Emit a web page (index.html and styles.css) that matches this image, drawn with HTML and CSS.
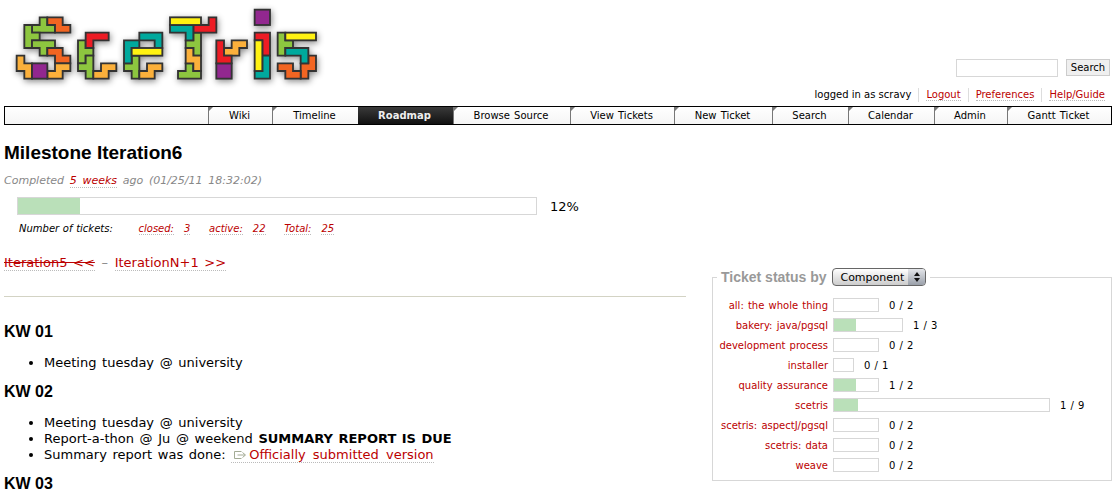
FILE: index.html
```html
<!DOCTYPE html>
<html lang="en">
<head>
<meta charset="utf-8">
<title>Milestone Iteration6</title>
<link rel="stylesheet" href="styles.css">
</head>
<body>
<header class="banner">
  <a class="logo" href="#" aria-label="SceTris">
    <svg class="logo-svg" viewBox="0 0 1020 300" width="340" height="100">
      <g stroke="#333" stroke-width="5.5" stroke-linejoin="miter">
        <g fill="#8dc63f">
          <polygon points="96,75 119,75 119,52 142,52 142,75 165,75 165,98 96,98"/>
          <polygon points="73,75 96,75 96,98 119,98 119,121 96,121 96,144 73,144"/>
          <polygon points="96,121 165,121 165,144 142,144 142,167 119,167 119,144 96,144"/>
          <polygon points="234,121 257,121 257,144 280,144 280,167 257,167 257,190 234,190"/>
          <polygon points="257,167 280,167 280,236 257,236 257,213 234,213 234,190 257,190"/>
          <polygon points="395,167 418,167 418,236 395,236 395,213 372,213 372,190 395,190"/>
          <polygon points="580,98 603,98 603,167 580,167 580,144 557,144 557,121 580,121"/>
          <polygon points="557,190 580,190 580,213 603,213 603,236 534,236 534,213 557,213"/>
          <polygon points="833,98 856,98 856,121 879,121 879,144 856,144 856,167 833,167"/>
        </g>
        <g fill="#f26522">
          <polygon points="142,52 188,52 188,75 211,75 211,98 165,98 165,75 142,75"/>
          <polygon points="142,144 188,144 188,167 211,167 211,190 165,190 165,167 142,167"/>
          <polygon points="925,167 948,167 948,213 925,213 925,236 902,236 902,190 925,190"/>
          <polygon points="833,190 879,190 879,213 902,213 902,236 856,236 856,213 833,213"/>
        </g>
        <g fill="#fbb03b">
          <polygon points="50,167 73,167 73,190 96,190 96,236 73,236 73,213 50,213"/>
          <polygon points="165,190 211,190 211,213 188,213 188,236 142,236 142,213 165,213"/>
          <polygon points="303,190 349,190 349,213 326,213 326,236 280,236 280,213 303,213"/>
          <polygon points="441,190 487,190 487,213 464,213 464,236 418,236 418,213 441,213"/>
          <polygon points="557,144 580,144 580,167 603,167 603,213 580,213 580,190 557,190"/>
          <polygon points="695,121 741,121 741,144 718,144 718,167 672,167 672,144 695,144"/>
        </g>
        <g fill="#92278f">
          <rect x="96" y="190" width="46" height="46"/>
          <rect x="649" y="190" width="46" height="46"/>
          <rect x="764" y="29" width="46" height="46"/>
        </g>
        <g fill="#ed1c24">
          <polygon points="257,98 326,98 326,121 280,121 280,144 257,144"/>
          <polygon points="626,52 649,52 649,98 580,98 580,75 626,75"/>
          <polygon points="649,121 672,121 672,167 695,167 695,190 649,190"/>
          <polygon points="764,98 810,98 810,167 787,167 787,121 764,121"/>
        </g>
        <g fill="#00a99d">
          <polygon points="418,98 487,98 487,144 464,144 464,121 418,121"/>
          <polygon points="372,121 418,121 418,144 395,144 395,190 372,190"/>
          <polygon points="510,75 580,75 580,121 557,121 557,98 510,98"/>
          <polygon points="787,167 810,167 810,236 764,236 764,213 787,213"/>
          <polygon points="856,144 925,144 925,190 902,190 902,167 856,167"/>
        </g>
        <g fill="#fff212">
          <rect x="395" y="144" width="92" height="23"/>
          <rect x="510" y="52" width="93" height="23"/>
          <rect x="764" y="121" width="23" height="92"/>
          <rect x="856" y="98" width="92" height="23"/>
        </g>
      </g>
    </svg>
  </a>
  <div class="tools">
    <form class="search">
      <input class="search-input" type="text" aria-label="Search">
      <button class="search-btn" type="button">Search</button>
    </form>
    <ul class="metanav">
      <li class="meta-item">logged in as scravy</li>
      <li class="meta-item"><a class="link" href="#">Logout</a></li>
      <li class="meta-item"><a class="link" href="#">Preferences</a></li>
      <li class="meta-item"><a class="link" href="#">Help/Guide</a></li>
    </ul>
  </div>
</header>

<nav class="mainnav">
  <a class="tab t-wiki" href="#">Wiki</a>
  <a class="tab t-timeline" href="#">Timeline</a>
  <a class="tab active t-roadmap" href="#">Roadmap</a>
  <a class="tab t-browse" href="#">Browse Source</a>
  <a class="tab t-view" href="#">View Tickets</a>
  <a class="tab t-new" href="#">New Ticket</a>
  <a class="tab t-search" href="#">Search</a>
  <a class="tab t-calendar" href="#">Calendar</a>
  <a class="tab t-admin" href="#">Admin</a>
  <a class="tab t-gantt" href="#">Gantt Ticket</a>
</nav>

<main class="content">
  <h1 class="title">Milestone Iteration6</h1>
  <p class="date">Completed <a class="link" href="#">5 weeks</a> ago (01/25/11 18:32:02)</p>
  <div class="overall">
    <div class="bar overall-bar"><div class="fill" style="width:12%"></div></div>
    <span class="pct">12%</span>
  </div>
  <p class="counts">
    <span class="counts-label">Number of tickets:</span>
    <a class="link" href="#">closed:</a><a class="link num" href="#">3</a>
    <a class="link gap" href="#">active:</a><a class="link num" href="#">22</a>
    <a class="link gap" href="#">Total:</a><a class="link num" href="#">25</a>
  </p>

  <div class="columns">
    <div class="main-col">
      <p class="pager"><a class="link closed" href="#">Iteration5 &lt;&lt;</a> <span class="dash">–</span> <a class="link" href="#">IterationN+1 &gt;&gt;</a></p>
      <hr class="rule">
      <h2 class="week first">KW 01</h2>
      <ul class="items">
        <li>Meeting tuesday @ university</li>
      </ul>
      <h2 class="week">KW 02</h2>
      <ul class="items">
        <li>Meeting tuesday @ university</li>
        <li>Report-a-thon @ Ju @ weekend <strong class="due">SUMMARY REPORT IS DUE</strong></li>
        <li>Summary report was done: <a class="link ext" href="#"><svg class="ext-icon" viewBox="0 0 14 10" width="14" height="10"><path d="M8.5 1.5H1.5v7h7M4.5 5h7.5M9.5 2.5 12.5 5l-3 2.5" fill="none" stroke="#a3ab95"/></svg>Officially submitted version</a></li>
      </ul>
      <h2 class="week">KW 03</h2>
    </div>

    <fieldset class="stats">
      <legend class="stats-legend">Ticket status by <span class="fake-select">Component<span class="arrows"></span></span></legend>
      <div class="stat"><a class="link plain stat-name" href="#">all: the whole thing</a><div class="bar w46"></div><span class="stat-val">0 / 2</span></div>
      <div class="stat"><a class="link plain stat-name" href="#">bakery: java/pgsql</a><div class="bar w70"><div class="fill" style="width:33%"></div></div><span class="stat-val">1 / 3</span></div>
      <div class="stat"><a class="link plain stat-name" href="#">development process</a><div class="bar w46"></div><span class="stat-val">0 / 2</span></div>
      <div class="stat"><a class="link plain stat-name" href="#">installer</a><div class="bar w21"></div><span class="stat-val">0 / 1</span></div>
      <div class="stat"><a class="link plain stat-name" href="#">quality assurance</a><div class="bar w46"><div class="fill" style="width:50%"></div></div><span class="stat-val">1 / 2</span></div>
      <div class="stat"><a class="link plain stat-name" href="#">scetris</a><div class="bar w217"><div class="fill" style="width:11%"></div></div><span class="stat-val">1 / 9</span></div>
      <div class="stat"><a class="link plain stat-name" href="#">scetris: aspectJ/pgsql</a><div class="bar w46"></div><span class="stat-val">0 / 2</span></div>
      <div class="stat"><a class="link plain stat-name" href="#">scetris: data</a><div class="bar w46"></div><span class="stat-val">0 / 2</span></div>
      <div class="stat"><a class="link plain stat-name" href="#">weave</a><div class="bar w46"></div><span class="stat-val">0 / 2</span></div>
    </fieldset>
  </div>
</main>
</body>
</html>
```

FILE: styles.css
```css
* { box-sizing: border-box; }
html, body { margin: 0; padding: 0; }
body {
  width: 1117px;
  height: 497px;
  overflow: hidden;
  background: #fff;
  color: #000;
  font-family: "DejaVu Sans", Verdana, sans-serif;
  font-size: 13px;
  word-spacing: 1.5px;
}
.link { color: #b00; text-decoration: none; border-bottom: 1px dotted #bbb; }
.link.plain { border-bottom: 0; }

.banner { display: flex; justify-content: space-between; height: 106px; }
.logo { display: block; width: 340px; height: 100px; }
.logo-svg { display: block; filter: drop-shadow(1px 2px 3px rgba(0,0,0,.45)) blur(.4px); }
.tools { display: flex; flex-direction: column; align-items: flex-end; padding: 58px 7px 0 0; }
.search { display: flex; align-items: center; gap: 8px; height: 19px; }
.search-input { width: 102px; height: 18px; border: 1px solid #d7d7d7; background: #fff; padding: 0; }
.search-btn {
  width: 44px; height: 17px; padding: 0; border: 1px solid #ccc; border-radius: 0;
  background: #efefef; color: #000; font: 10px "DejaVu Sans", sans-serif; word-spacing: 0;
}
.metanav {
  display: flex; list-style: none; margin: 11px 5px 0 0; padding: 0;
  font-size: 10px; line-height: 14px; word-spacing: 0;
}
.meta-item { padding: 0 7px; border-left: 1px solid #ddd; }
.meta-item:first-child { border-left: 0; }
.meta-item:last-child { padding-right: 0; }

.mainnav {
  display: flex; justify-content: flex-end; height: 19px; margin: 0 5px 0 4px;
  border: 1px solid #000; background: linear-gradient(#fff, #f5f5f5);
}
.tab {
  position: relative; display: block; height: 17px; padding-right: 2px; text-align: center;
  font-size: 10px; line-height: 17px; word-spacing: 1px; color: #000; text-decoration: none;
  border-left: 1px solid #777;
}
.tab::before {
  content: ""; position: absolute; left: 0; top: 0;
  border-top: 4px solid #777; border-right: 4px solid transparent;
}
.tab.active { background: linear-gradient(#3a3a3a, #111); color: #eee; font-weight: bold; border-left: 0; }
.tab.active::before { display: none; }
.t-wiki { width: 64px; } .t-timeline { width: 86px; } .t-roadmap { width: 95px; }
.t-browse { width: 117px; } .t-view { width: 104px; } .t-new { width: 98px; }
.t-search { width: 76px; } .t-calendar { width: 86px; } .t-admin { width: 73px; }
.t-gantt { width: 104px; }

.content { padding: 0 4px; }
.title { margin: 17px 0 0; font: bold 19px/22px "Liberation Sans", Arial, sans-serif; word-spacing: 0; }
.date { margin: 10px 0 0; font-size: 11px; line-height: 14px; font-style: italic; color: #888; word-spacing: 2.2px; }
.overall { display: flex; align-items: center; margin: 9px 0 0 13px; }
.bar { height: 14px; border: 1px solid #d7d7d7; background: #fff; flex: none; }
.fill { height: 100%; background: #bae0b9; }
.overall-bar { width: 520px; height: 18px; }
.pct { margin-left: 13px; }
.counts { margin: 7px 0 0 15px; font-size: 10px; line-height: 14px; font-style: italic; word-spacing: .5px; }
.counts-label { margin-right: 22px; }
.num { margin-left: 10px; }
.gap { margin-left: 15px; }

.columns { display: flex; }
.main-col { width: 682px; flex: none; }
.pager { margin: 19px 0 0; line-height: 16px; }
.closed { text-decoration: line-through; }
.dash { margin: 0 1px; color: #888; }
.rule { margin: 25px 0 0; height: 1px; border: 0; background: #d3d3c4; }
.week { margin: 11px 0 0; font: bold 16px/20px "Liberation Sans", Arial, sans-serif; word-spacing: 0; }
.week.first { margin-top: 25px; }
.items { margin: 13px 0 0; padding: 0 0 0 40px; line-height: 16px; }
.due { word-spacing: 1px; }
.ext { padding-left: 2px; word-spacing: 3px; }
.ext-icon { margin: 0 2px 0 0; vertical-align: -1px; }

.stats {
  width: 400px; height: 213px; margin: 32px 0 0 26px; padding: 9px 0 0;
  border: 1px solid #d7d7d7; min-width: 0; flex: none;
}
.stats-legend {
  margin-left: 4px; padding: 0 4px; color: #999;
  font: bold 14px/18px "Liberation Sans", sans-serif; word-spacing: 0;
}
.fake-select {
  display: inline-flex; align-items: center; justify-content: space-between; vertical-align: top;
  width: 94px; height: 18px; margin-left: 2px; padding-left: 7px;
  border: 1px solid #666; border-radius: 4px; color: #000;
  font: 11px "DejaVu Sans", sans-serif;
  background: linear-gradient(#fff, #ccc);
}
.arrows {
  position: relative; width: 17px; height: 16px; border-radius: 0 3px 3px 0;
  background: linear-gradient(#e4e6ea, #9aa0aa);
}
.arrows::before, .arrows::after {
  content: ""; position: absolute; left: 6px;
  border-left: 3px solid transparent; border-right: 3px solid transparent;
}
.arrows::before { top: 3px; border-bottom: 4px solid #111; }
.arrows::after { bottom: 3px; border-top: 4px solid #111; }
.stat { display: flex; align-items: center; height: 20px; font-size: 10px; word-spacing: 1px; }
.stat-name { width: 115px; margin-right: 5px; text-align: right; flex: none; white-space: nowrap; }
.stat-val { margin-left: 10px; }
.w46 { width: 46px; } .w70 { width: 70px; } .w21 { width: 21px; } .w217 { width: 217px; }
```
